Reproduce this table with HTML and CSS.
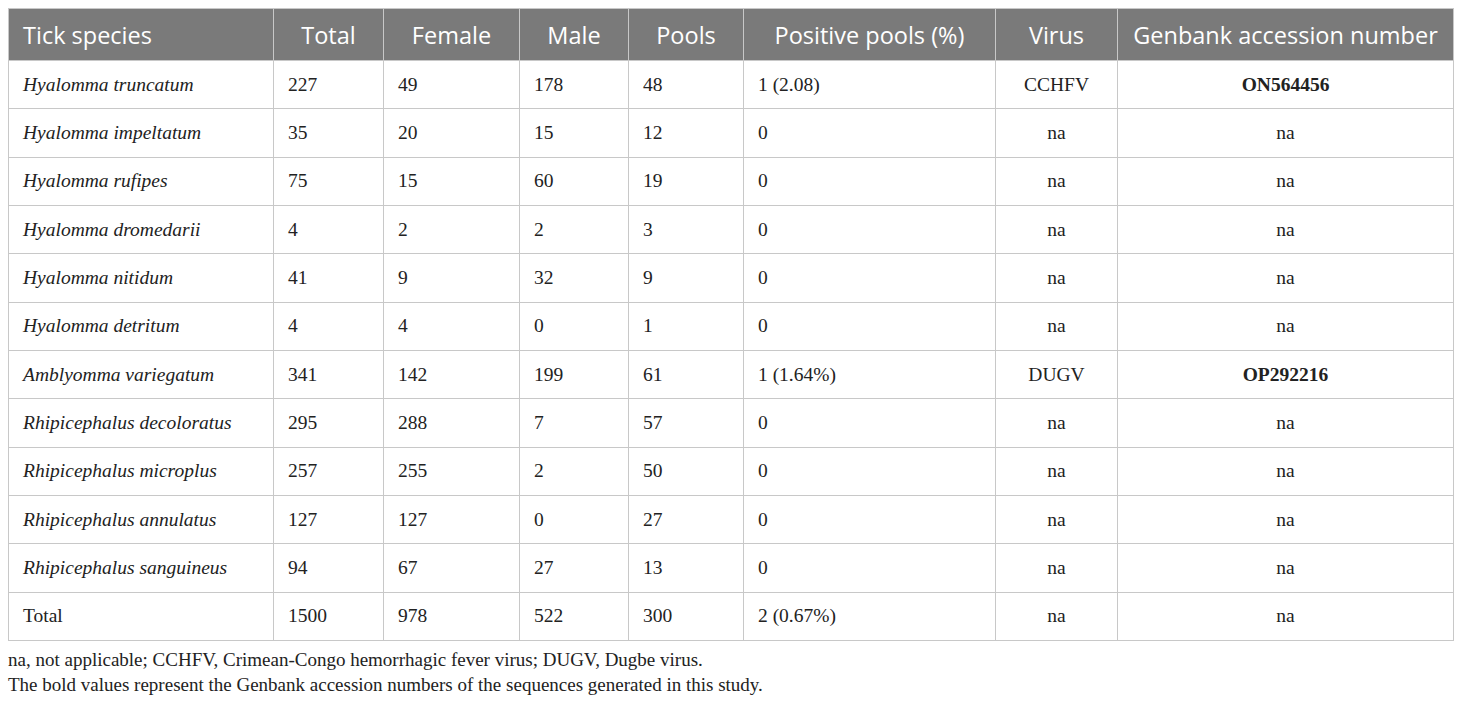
FILE: index.html
```html
<!DOCTYPE html>
<html>
<head>
<meta charset="utf-8">
<link rel="stylesheet" href="styles.css">
</head>
<body>
<table class="tbl">
<colgroup>
<col class="c1"><col class="c2"><col class="c3"><col class="c4"><col class="c5"><col class="c6"><col class="c7"><col class="c8">
</colgroup>
<thead>
<tr><th class="left">Tick species</th><th>Total</th><th>Female</th><th>Male</th><th>Pools</th><th>Positive pools (%)</th><th>Virus</th><th>Genbank accession number</th></tr>
</thead>
<tbody>
<tr><td><i>Hyalomma truncatum</i></td><td>227</td><td>49</td><td>178</td><td>48</td><td>1 (2.08)</td><td class="ctr">CCHFV</td><td class="ctr"><b>ON564456</b></td></tr>
<tr><td><i>Hyalomma impeltatum</i></td><td>35</td><td>20</td><td>15</td><td>12</td><td>0</td><td class="ctr">na</td><td class="ctr">na</td></tr>
<tr><td><i>Hyalomma rufipes</i></td><td>75</td><td>15</td><td>60</td><td>19</td><td>0</td><td class="ctr">na</td><td class="ctr">na</td></tr>
<tr><td><i>Hyalomma dromedarii</i></td><td>4</td><td>2</td><td>2</td><td>3</td><td>0</td><td class="ctr">na</td><td class="ctr">na</td></tr>
<tr><td><i>Hyalomma nitidum</i></td><td>41</td><td>9</td><td>32</td><td>9</td><td>0</td><td class="ctr">na</td><td class="ctr">na</td></tr>
<tr><td><i>Hyalomma detritum</i></td><td>4</td><td>4</td><td>0</td><td>1</td><td>0</td><td class="ctr">na</td><td class="ctr">na</td></tr>
<tr><td><i>Amblyomma variegatum</i></td><td>341</td><td>142</td><td>199</td><td>61</td><td>1 (1.64%)</td><td class="ctr">DUGV</td><td class="ctr"><b>OP292216</b></td></tr>
<tr><td><i>Rhipicephalus decoloratus</i></td><td>295</td><td>288</td><td>7</td><td>57</td><td>0</td><td class="ctr">na</td><td class="ctr">na</td></tr>
<tr><td><i>Rhipicephalus microplus</i></td><td>257</td><td>255</td><td>2</td><td>50</td><td>0</td><td class="ctr">na</td><td class="ctr">na</td></tr>
<tr><td><i>Rhipicephalus annulatus</i></td><td>127</td><td>127</td><td>0</td><td>27</td><td>0</td><td class="ctr">na</td><td class="ctr">na</td></tr>
<tr><td><i>Rhipicephalus sanguineus</i></td><td>94</td><td>67</td><td>27</td><td>13</td><td>0</td><td class="ctr">na</td><td class="ctr">na</td></tr>
<tr><td>Total</td><td>1500</td><td>978</td><td>522</td><td>300</td><td>2 (0.67%)</td><td class="ctr">na</td><td class="ctr">na</td></tr>
</tbody>
</table>
<div class="notes">
<p>na, not applicable; CCHFV, Crimean-Congo hemorrhagic fever virus; DUGV, Dugbe virus.</p>
<p>The bold values represent the Genbank accession numbers of the sequences generated in this study.</p>
</div>
</body>
</html>
```
FILE: styles.css
```css
html, body {
  margin: 0;
  padding: 0;
  background: #fff;
}
body {
  padding: 8px 8px 0 8px;
  font-family: "Liberation Serif", "Times New Roman", serif;
  color: #222;
}
.tbl {
  border-collapse: collapse;
  table-layout: fixed;
  width: 1445px;
}
.c1 { width: 265px; }
.c2 { width: 110px; }
.c3 { width: 136px; }
.c4 { width: 109px; }
.c5 { width: 115px; }
.c6 { width: 252px; }
.c7 { width: 122px; }
.c8 { width: 336px; }
.tbl th {
  background: #7a7a7a;
  color: #fff;
  font-family: "Open Sans", "Noto Sans", sans-serif;
  font-weight: 400;
  font-size: 23.5px;
  height: 51px;
  padding: 0 14px;
  text-align: center;
  border: 1px solid #c8c8c8;
  white-space: nowrap;
}
.tbl th.left { text-align: left; }
.tbl td {
  font-size: 19.5px;
  height: 47.33px;
  padding: 0 14px;
  text-align: left;
  border: 1px solid #c8c8c8;
  white-space: nowrap;
}
.tbl td.ctr { text-align: center; }
.notes {
  font-size: 19px;
  margin-top: 6px;
}
.notes p {
  margin: 0;
  line-height: 25px;
}
```
